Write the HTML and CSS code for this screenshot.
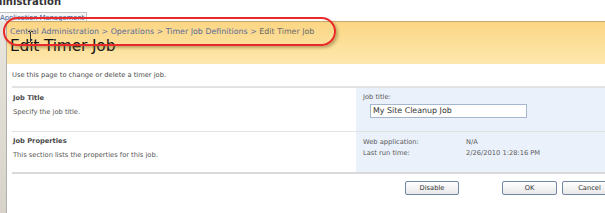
FILE: index.html
```html
<!DOCTYPE html>
<html>
<head>
<meta charset="utf-8">
<link rel="stylesheet" href="styles.css">
</head>
<body>
<div class="page">
  <div class="topbar">
    <div class="sitetitle"><span>Central Administration</span></div>
    <div class="tab">Application Management</div>
  </div>
  <div class="main">
    <div class="sidebar"></div>
    <div class="content">
      <div class="header">
        <div class="crumbs"><a>Central Administration</a> &gt; <a>Operations</a> &gt; <a>Timer Job Definitions</a> &gt; <span class="cur">Edit Timer Job</span></div>
        <h1 class="title">Edit Timer Job</h1>
      </div>
      <div class="intro">Use this page to change or delete a timer job.</div>
      <div class="section first">
        <div class="sec-left">
          <div class="sec-title">Job Title</div>
          <div class="sec-desc">Specify the job title.</div>
        </div>
        <div class="sec-right">
          <div class="field-label">Job title:</div>
          <div class="input">My Site Cleanup Job</div>
        </div>
      </div>
      <div class="section last">
        <div class="sec-left">
          <div class="sec-title">Job Properties</div>
          <div class="sec-desc">This section lists the properties for this job.</div>
        </div>
        <div class="sec-right props">
          <div class="prop"><span class="pname">Web application:</span><span>N/A</span></div>
          <div class="prop"><span class="pname">Last run time:</span><span>2/26/2010 1:28:16 PM</span></div>
        </div>
      </div>
      <div class="buttons">
        <div class="btn disable">Disable</div>
        <div class="btn ok">OK</div>
        <div class="btn cancel">Cancel</div>
      </div>
    </div>
  </div>
  <div class="annot"></div>
  <svg class="cursor" width="7" height="12" viewBox="0 0 7 12"><path d="M1 0.5h2M4 0.5h2M3.5 1v10M1 11.5h2M4 11.5h2" stroke="#333" stroke-width="1" fill="none"/></svg>
</div>
</body>
</html>
```
FILE: styles.css
```css
html, body { margin: 0; padding: 0; background: #fff; }
body { width: 605px; height: 213px; overflow: hidden; font-family: "DejaVu Sans", Verdana, sans-serif; }
.page { position: relative; width: 605px; height: 213px; overflow: hidden; }
.topbar { height: 21px; display: flow-root; }
.sitetitle { width: 61px; height: 5px; display: flex; justify-content: flex-end; align-items: flex-end; overflow: visible; white-space: nowrap; font-weight: bold; font-size: 10px; line-height: 10px; color: #333; }
.sitetitle span { display: block; margin-bottom: -2px; }
.tab { display: inline-block; margin-top: 7px; height: 8px; padding: 1px 2px 0 0; border: 1px solid #c4c4c4; border-left: none; border-bottom: none; background: #f5f5f5; font-size: 7px; line-height: 8px; color: #3d5f9b; letter-spacing: -0.15px; vertical-align: top; }
.main { display: flex; height: 192px; }
.sidebar { flex: 0 0 6px; background: linear-gradient(#e8e5de, #d7d3ca); border-right: 1px solid #b3b0a8; }
.content { flex: 1; min-width: 0; display: flex; flex-direction: column; overflow: hidden; }
.header { height: 42px; border-top: 1px solid #c7a76b; background: linear-gradient(#fbd684, #fee8ae); padding-left: 3px; flex: 0 0 auto; }
.crumbs { margin-top: 5px; font-size: 7.9px; line-height: 10px; color: #5b6d9a; white-space: nowrap; }
.crumbs a { color: #5b6d9a; }
.crumbs .cur { color: #6a6a6a; }
.title { margin: 0; font-weight: normal; font-size: 15.5px; line-height: 18px; color: #151515; letter-spacing: -0.2px; white-space: nowrap; }
.intro { flex: 0 0 24px; box-sizing: border-box; margin-left: 5px; padding-top: 6px; font-size: 6.7px; line-height: 10px; color: #4a4a4a; border-bottom: 2px solid #e2e2e2; }
.section { display: flex; margin-left: 5px; flex: 0 0 auto; }
.section.first { height: 44px; box-sizing: border-box; border-bottom: 1px solid #e2e2e2; }
.section.last { height: 42px; box-sizing: border-box; border-bottom: 2px solid #d9d9d9; }
.sec-left { flex: 1; padding: 5px 0 0 1px; font-size: 6.7px; line-height: 10px; color: #555; }
.section.last .sec-left { padding-top: 4px; }
.sec-title { font-weight: bold; color: #4a4a4a; }
.sec-desc { margin-top: 4px; }
.sec-right { flex: 0 0 249px; background: #eaf1fb; padding: 4px 0 0 7px; box-sizing: border-box; font-size: 6.7px; line-height: 10px; color: #5a5a5a; }
.input { margin-left: 7px; margin-top: 2px; width: 157px; height: 14px; border: 1px solid #a5b7cf; background: #fff; font-size: 7.9px; line-height: 12px; padding-left: 2px; box-sizing: border-box; color: #333; }
.sec-right.props { padding-top: 5px; }
.prop { display: flex; line-height: 10.5px; }
.pname { width: 103px; flex: 0 0 103px; }
.buttons { display: flex; padding-top: 7px; padding-left: 398px; }
.btn { flex: 0 0 auto; height: 14px; box-sizing: border-box; border: 1px solid #7287a3; border-radius: 2px; background: linear-gradient(#ffffff, #e8e8e8); font-size: 6.7px; line-height: 12px; text-align: center; color: #333; }
.btn.disable { width: 54px; margin-right: 43px; }
.btn.ok { width: 55px; margin-right: 5px; }
.btn.cancel { width: 55px; }
.annot { position: absolute; left: 3px; top: 17px; width: 333px; height: 29px; box-sizing: border-box; border: 2px solid #ea2a2a; border-radius: 15px; box-shadow: 2px 2px 3px rgba(120, 100, 40, 0.45); }
.cursor { position: absolute; left: 27px; top: 31px; }
```
